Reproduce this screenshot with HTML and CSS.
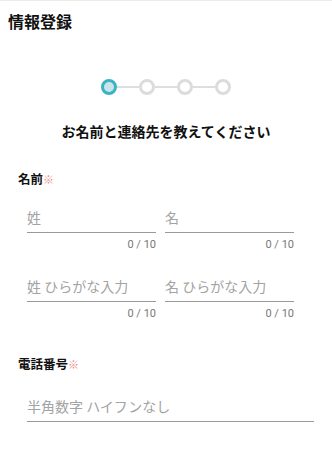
FILE: index.html
```html
<!DOCTYPE html>
<html lang="ja">
<head>
<meta charset="utf-8">
<title>情報登録</title>
<link rel="stylesheet" href="styles.css">
</head>
<body>
<header class="header">情報登録</header>
<div class="stepper">
  <span class="step step-active"></span>
  <span class="bar"></span>
  <span class="step"></span>
  <span class="bar"></span>
  <span class="step"></span>
  <span class="bar"></span>
  <span class="step"></span>
</div>
<h2 class="heading">お名前と連絡先を教えてください</h2>
<form class="form">
  <div class="label">名前<span class="req">※</span></div>
  <div class="name-grid">
    <div class="field">
      <input class="input" placeholder="姓">
      <div class="counter">0 / 10</div>
    </div>
    <div class="field">
      <input class="input" placeholder="名">
      <div class="counter">0 / 10</div>
    </div>
    <div class="field">
      <input class="input" placeholder="姓 ひらがな入力">
      <div class="counter">0 / 10</div>
    </div>
    <div class="field">
      <input class="input" placeholder="名 ひらがな入力">
      <div class="counter">0 / 10</div>
    </div>
  </div>
  <div class="label label-phone">電話番号<span class="req">※</span></div>
  <div class="phone">
    <input class="input" placeholder="半角数字 ハイフンなし">
  </div>
</form>
</body>
</html>
```
FILE: styles.css
```css
* { box-sizing: border-box; }
html, body { margin: 0; padding: 0; background: #fff; }
body {
  font-family: "Noto Sans CJK JP", "Noto Sans", sans-serif;
  color: #222;
  width: 332px;
  height: 455px;
  overflow: hidden;
  border-top: 1px solid #ececec;
}
.header {
  height: 41px;
  line-height: 41px;
  padding-left: 8px;
  font-size: 16px;
  font-weight: 700;
  color: #111;
}
.stepper {
  margin-top: 37px;
  display: flex;
  align-items: center;
  justify-content: center;
  height: 16px;
  padding-left: 0;
}
.step {
  width: 16px;
  height: 16px;
  border-radius: 50%;
  border: 3px solid #dcdcdc;
  background: #fff;
  flex: none;
}
.step-active {
  border-color: #3bb3c2;
  background: #c9e4ea;
}
.bar {
  width: 22px;
  height: 2px;
  background: #dedede;
  flex: none;
}
.heading {
  margin: 26px 0 0;
  font-size: 14px;
  line-height: 20px;
  font-weight: 700;
  text-align: center;
  color: #111;
}
.form {
  margin: 0;
  padding: 29px 18px 0 18px;
}
.label {
  font-size: 12.5px;
  line-height: 18px;
  font-weight: 700;
  color: #111;
}
.req {
  color: #ef8a8a;
  font-weight: 400;
  font-size: 11px;
}
.name-grid {
  margin-top: 19px;
  padding: 0 20px 0 9px;
  display: grid;
  grid-template-columns: 1fr 1fr;
  column-gap: 9px;
  row-gap: 24px;
}
.field { display: flex; flex-direction: column; }
.input {
  display: block;
  width: 100%;
  border: none;
  border-bottom: 1.5px solid #9a9a9a;
  outline: none;
  padding: 0 0 4px;
  margin: 0;
  height: 25.5px;
  font-family: inherit;
  font-size: 14px;
  line-height: 20px;
  color: #222;
  background: transparent;
}
.input::placeholder { color: #a3a3a3; }
.counter {
  margin-top: 5.5px;
  text-align: right;
  font-size: 11px;
  line-height: 14px;
  color: #777;
  font-family: "Roboto", "Noto Sans", sans-serif;
}
.label-phone { margin-top: 34px; }
.phone {
  margin-top: 23px;
  padding-left: 9px;
}
```
